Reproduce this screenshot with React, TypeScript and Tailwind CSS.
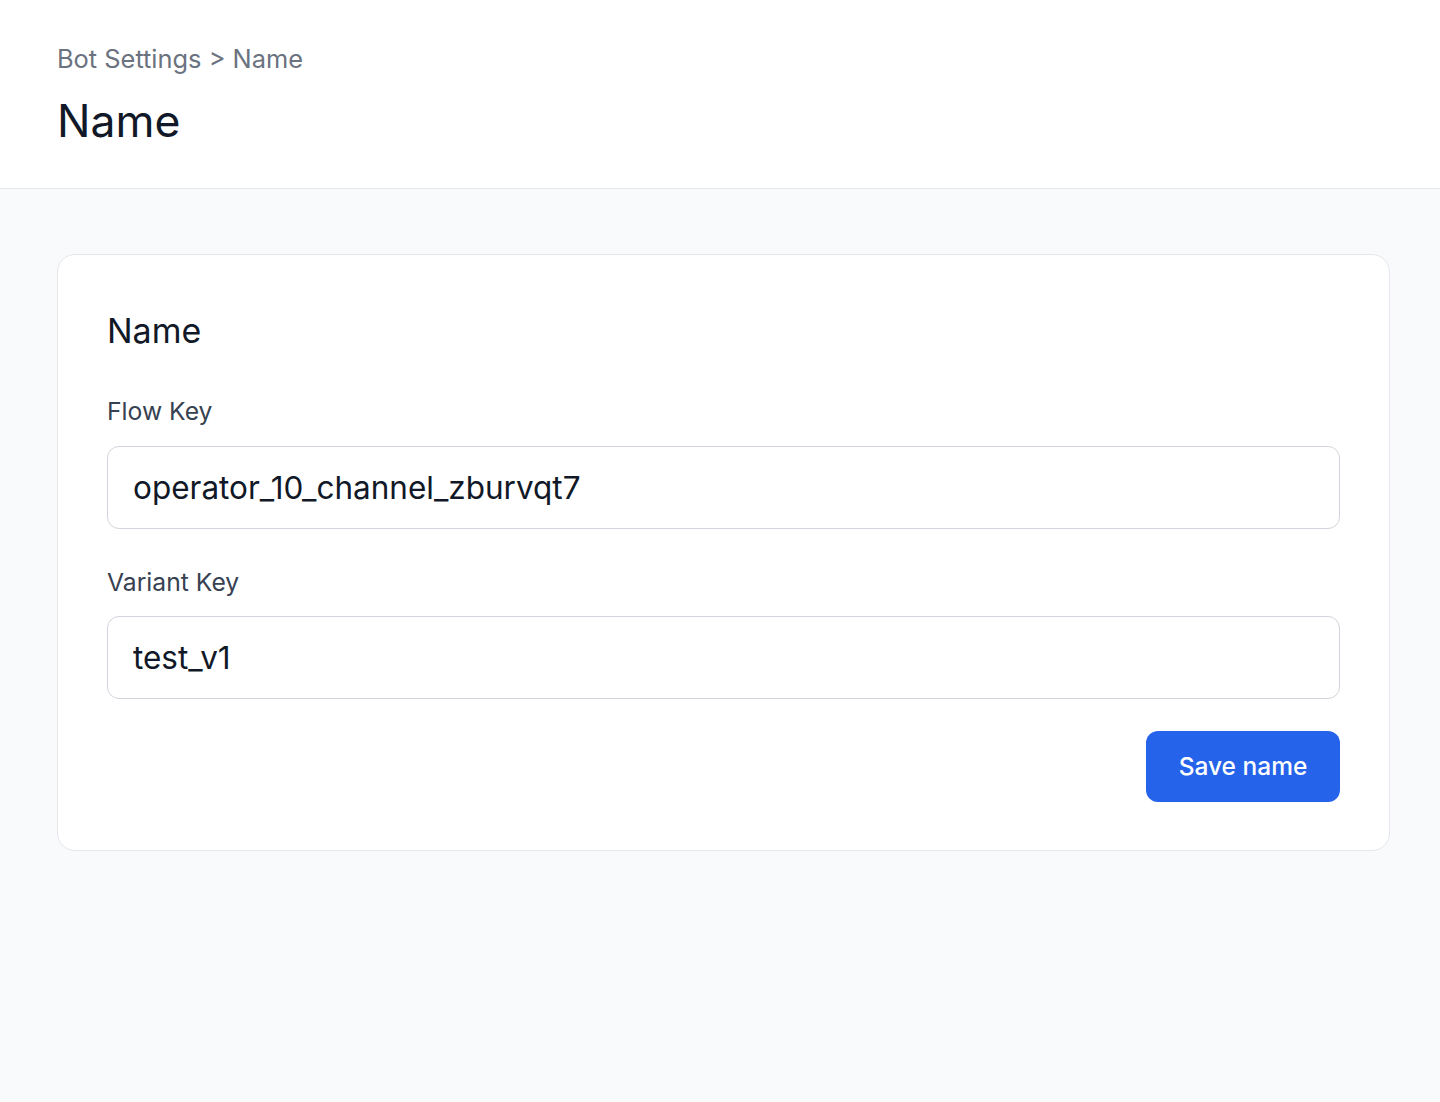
import React from "react";

export default function App() {
  return (
    <div className="min-h-[1102px] bg-[#f9fafb] font-['Inter',sans-serif]">
      <header className="bg-white border-b-[1.5px] border-[#e5e7eb] pl-[57px] pr-[50px] pt-[41px] pb-[38px]">
        <div className="text-[25.4px] leading-[36px] text-[#6b7280]">Bot Settings &gt; Name</div>
        <h1 className="mt-[15px] text-[44.5px] leading-[58px] text-[#111827]">Name</h1>
      </header>
      <main className="pl-[57px] pr-[50px] pt-[65px]">
        <section className="bg-white border-[1.5px] border-[#e5e7eb] rounded-[18px] px-[49px] pt-[52px] pb-[48px]">
          <h2 className="text-[34px] leading-[48px] text-[#111827]">Name</h2>
          <div className="mt-[38px]">
            <label className="block text-[24.7px] leading-[36px] text-[#374151]">Flow Key</label>
            <input
              readOnly
              value="operator_10_channel_zburvqt7"
              className="mt-[17px] block w-full h-[83px] rounded-[12px] border-[1.5px] border-[#d1d5db] px-[25px] text-[31.5px] text-[#111827] outline-none"
            />
          </div>
          <div className="mt-[35px]">
            <label className="block text-[24.7px] leading-[36px] text-[#374151]">Variant Key</label>
            <input
              readOnly
              value="test_v1"
              className="mt-[16px] block w-full h-[83px] rounded-[12px] border-[1.5px] border-[#d1d5db] px-[25px] text-[31.5px] text-[#111827] outline-none"
            />
          </div>
          <div className="mt-[32px] flex justify-end">
            <button className="h-[71px] w-[194px] rounded-[12px] bg-[#2563eb] text-[24.5px] font-medium text-white">
              Save name
            </button>
          </div>
        </section>
      </main>
    </div>
  );
}
